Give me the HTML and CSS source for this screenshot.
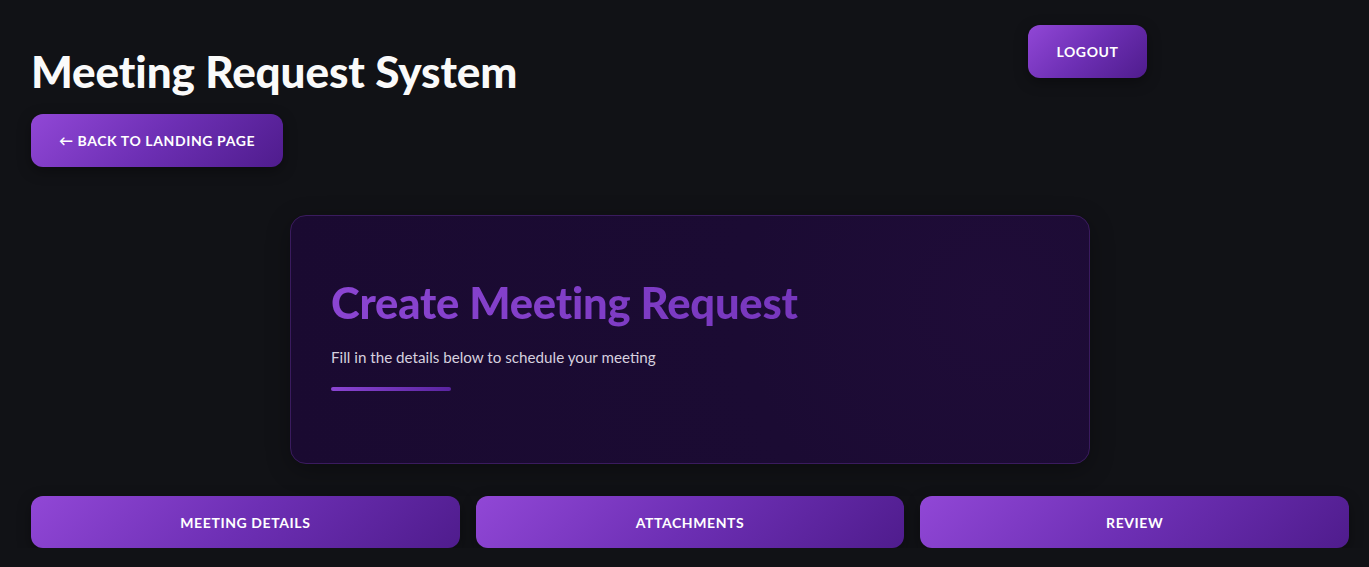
FILE: index.html
```html
<!DOCTYPE html>
<html>
<head>
<meta charset="utf-8">
<link rel="stylesheet" href="styles.css">
</head>
<body>
<div class="app">
  <div class="header">
    <div class="header-left">
      <h1 class="title">Meeting Request System</h1>
      <button class="btn back">← Back to Landing Page</button>
    </div>
    <div class="header-right">
      <button class="btn logout">Logout</button>
    </div>
  </div>
  <div class="card-wrap">
    <div class="card">
      <h2 class="card-title">Create Meeting Request</h2>
      <p class="card-sub">Fill in the details below to schedule your meeting</p>
      <div class="card-bar"></div>
    </div>
  </div>
  <div class="tabs">
    <button class="btn tab">Meeting Details</button>
    <button class="btn tab">Attachments</button>
    <button class="btn tab">Review</button>
  </div>
</div>
</body>
</html>
```
FILE: styles.css
```css
html, body {
  margin: 0;
  padding: 0;
  background: #111216;
  font-family: "Lato", "Noto Sans", sans-serif;
  color: #fafafa;
}
.app {
  padding: 0 20px 0 31px;
}
.header {
  display: flex;
  align-items: flex-start;
}
.header-left {
  width: 997px;
}
.title {
  margin: 0;
  padding-top: 44px;
  font-size: 44px;
  line-height: 54px;
  font-weight: 900;
  letter-spacing: -0.1px;
  color: #fafafa;
}
.btn {
  border: none;
  border-radius: 12px;
  background: linear-gradient(135deg, #9147d6 0%, #6d2fb4 50%, #4f1c8d 100%);
  color: #ffffff;
  font-family: inherit;
  font-weight: 700;
  font-size: 14px;
  letter-spacing: 0.6px;
  text-transform: uppercase;
  box-shadow: 0 4px 14px rgba(0, 0, 0, 0.35);
  cursor: pointer;
}
.back {
  margin-top: 16px;
  width: 252px;
  height: 53px;
}
.header-right {
  padding-top: 25px;
}
.logout {
  width: 119px;
  height: 53px;
}
.card-wrap {
  display: flex;
  justify-content: center;
  padding: 48px 0 32px 0;
}
.card {
  box-sizing: border-box;
  width: 800px;
  height: 249px;
  border: 1px solid #3a1b5e;
  border-radius: 16px;
  background: radial-gradient(circle at 88% 35%, #1f0c38 0%, #1b0b33 35%, #1a0a31 100%);
  padding: 61px 40px 0 40px;
  box-shadow: 0 6px 24px rgba(0, 0, 0, 0.3);
}
.card-title {
  margin: 0;
  font-size: 43.5px;
  line-height: 50px;
  font-weight: 900;
  background: linear-gradient(90deg, #8b45d2 0%, #6c2fb2 100%);
  -webkit-background-clip: text;
  background-clip: text;
  color: transparent;
  letter-spacing: -0.2px;
}
.card-sub {
  margin: 19px 0 0 0;
  font-size: 15.2px;
  line-height: 22px;
  color: #d6d0df;
}
.card-bar {
  margin-top: 19px;
  width: 120px;
  height: 4px;
  border-radius: 2px;
  background: linear-gradient(90deg, #8b45d2, #5a24a0);
}
.tabs {
  display: flex;
  gap: 16px;
}
.tab {
  flex: 1;
  height: 52px;
  padding-top: 2px;
}
```
